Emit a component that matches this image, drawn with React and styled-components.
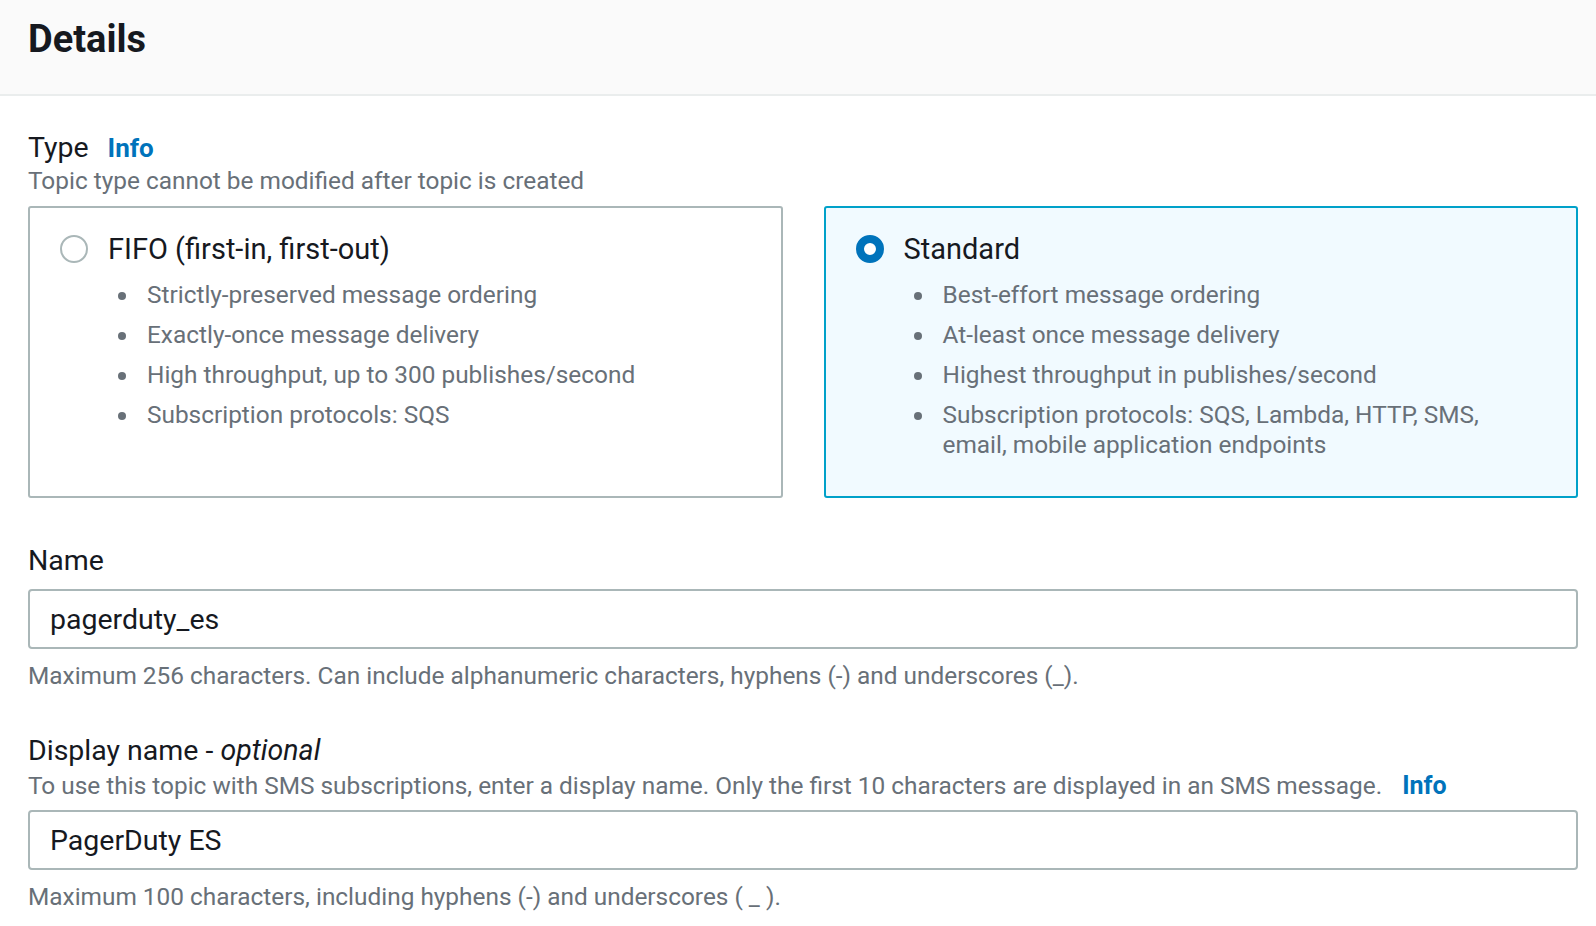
import React, { useState } from 'react';
import styled, { createGlobalStyle } from 'styled-components';

const GlobalStyle = createGlobalStyle`
  * { box-sizing: border-box; }
  body {
    margin: 0;
    background: #fff;
    font-family: Roboto, "Noto Sans", Arial, sans-serif;
    color: #16191f;
  }
`;

const Page = styled.div`
  width: 1596px;
`;

const Header = styled.div`
  height: 96px;
  padding: 0 18px 0 28px;
  display: flex;
  align-items: center;
  background: #fafafa;
  border-bottom: 2px solid #eaeded;
`;

const Title = styled.h2`
  margin: 0 0 16px;
  font-size: 38px;
  font-weight: 700;
  line-height: 42px;
`;

const Body = styled.div`
  padding: 34px 18px 0 28px;
  display: flex;
  flex-direction: column;
`;

const Field = styled.div`
  display: flex;
  flex-direction: column;
  margin-bottom: ${props => props.gap || 0}px;
`;

const Label = styled.div`
  font-size: 28.5px;
  line-height: 36px;
`;

const Optional = styled.i`
  font-style: italic;
`;

const InfoLink = styled.a`
  color: #0073bb;
  font-weight: 700;
  font-size: ${props => props.small ? 25 : 26}px;
  text-decoration: none;
  cursor: pointer;
  margin-left: ${props => props.offset || 19}px;
`;

const Description = styled.div`
  margin-top: ${props => props.top || 0}px;
  margin-bottom: ${props => props.bottom || 10}px;
  font-size: 24.4px;
  line-height: 30px;
  color: #687078;
`;

const Tiles = styled.div`
  display: grid;
  grid-template-columns: 1fr 1fr;
  gap: 41px;
  margin-bottom: 45px;
`;

const Tile = styled.label`
  height: 292px;
  padding: 23px 40px 0 30px;
  border: 2px solid ${props => props.selected ? '#00a1c9' : '#aab7b8'};
  background: ${props => props.selected ? '#f1faff' : '#fff'};
  border-radius: 3px;
  cursor: pointer;
`;

const TileHead = styled.div`
  display: flex;
  align-items: center;
  gap: 20px;
  font-size: 29px;
  line-height: 36px;
`;

const Radio = styled.span`
  flex: none;
  width: 28px;
  height: 28px;
  border-radius: 50%;
  border: ${props => props.checked ? '8px solid #0073bb' : '2px solid #aab7b8'};
  background: #fff;
`;

const Bullets = styled.ul`
  margin: 13px 0 0;
  padding: 0 0 0 80px;
  font-size: 24.4px;
  line-height: 30px;
  color: #687078;

  li {
    margin-bottom: 10px;
    padding-left: 7px;
  }
`;

const Input = styled.input`
  width: 100%;
  height: 60px;
  margin-top: ${props => props.top || 0}px;
  padding: 0 20px;
  border: 2px solid #aab7b8;
  border-radius: 4px;
  font-family: inherit;
  font-size: 28.5px;
  color: #16191f;
  outline: none;
`;

const Hint = styled.div`
  margin-top: 12px;
  font-size: 24.4px;
  line-height: 30px;
  color: #687078;
`;

const types = [
  {
    id: 'fifo',
    title: 'FIFO (first-in, first-out)',
    points: [
      'Strictly-preserved message ordering',
      'Exactly-once message delivery',
      'High throughput, up to 300 publishes/second',
      'Subscription protocols: SQS',
    ],
  },
  {
    id: 'standard',
    title: 'Standard',
    points: [
      'Best-effort message ordering',
      'At-least once message delivery',
      'Highest throughput in publishes/second',
      'Subscription protocols: SQS, Lambda, HTTP, SMS, email, mobile application endpoints',
    ],
  },
];

export default function App() {
  const [type, setType] = useState('standard');
  const [name, setName] = useState('pagerduty_es');
  const [displayName, setDisplayName] = useState('PagerDuty ES');

  return (
    <Page>
      <GlobalStyle />
      <Header>
        <Title>Details</Title>
      </Header>
      <Body>
        <Field>
          <Label>Type<InfoLink>Info</InfoLink></Label>
          <Description>Topic type cannot be modified after topic is created</Description>
        </Field>
        <Tiles>
          {types.map(t => (
            <Tile key={t.id} selected={type === t.id} onClick={() => setType(t.id)}>
              <TileHead>
                <Radio checked={type === t.id} />
                {t.title}
              </TileHead>
              <Bullets>
                {t.points.map(p => <li key={p}>{p}</li>)}
              </Bullets>
            </Tile>
          ))}
        </Tiles>
        <Field gap={42}>
          <Label>Name</Label>
          <Input top={10} value={name} onChange={e => setName(e.target.value)} />
          <Hint>Maximum 256 characters. Can include alphanumeric characters, hyphens (-) and underscores (_).</Hint>
        </Field>
        <Field>
          <Label>Display name - <Optional>optional</Optional></Label>
          <Description top={2} bottom={9}>
            To use this topic with SMS subscriptions, enter a display name. Only the first 10 characters are displayed in an SMS message.
            <InfoLink small offset={20}>Info</InfoLink>
          </Description>
          <Input value={displayName} onChange={e => setDisplayName(e.target.value)} />
          <Hint>Maximum 100 characters, including hyphens (-) and underscores ( _ ).</Hint>
        </Field>
      </Body>
    </Page>
  );
}
